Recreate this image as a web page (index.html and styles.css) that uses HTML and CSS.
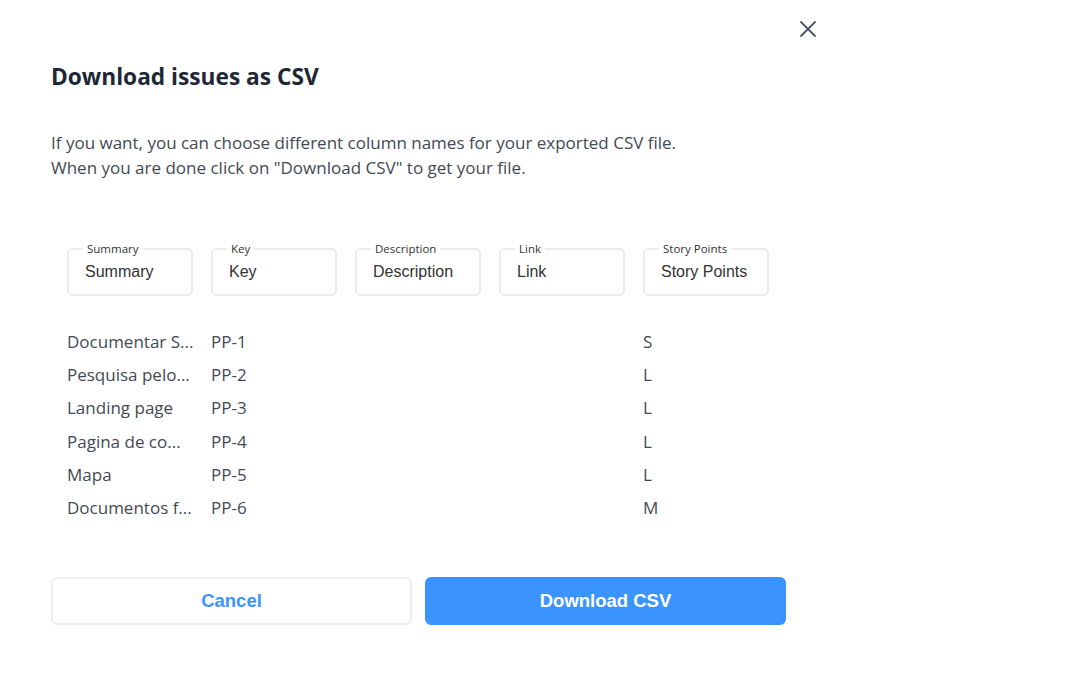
FILE: index.html
```html
<!DOCTYPE html>
<html lang="en">
<head>
<meta charset="utf-8">
<title>Download issues as CSV</title>
<link rel="stylesheet" href="styles.css">
</head>
<body>
<div class="modal">
  <button class="close" aria-label="Close">
    <svg width="18" height="18" viewBox="0 0 18 18"><path d="M2 2 L16 16 M16 2 L2 16" stroke="#4a5563" stroke-width="1.8" stroke-linecap="round" fill="none"/></svg>
  </button>
  <h1 class="title">Download issues as CSV</h1>
  <p class="intro">If you want, you can choose different column names for your exported CSV file.<br>When you are done click on "Download CSV" to get your file.</p>

  <div class="grid fields">
    <fieldset class="field"><legend>Summary</legend><input type="text" value="Summary"></fieldset>
    <fieldset class="field"><legend>Key</legend><input type="text" value="Key"></fieldset>
    <fieldset class="field"><legend>Description</legend><input type="text" value="Description"></fieldset>
    <fieldset class="field"><legend>Link</legend><input type="text" value="Link"></fieldset>
    <fieldset class="field"><legend>Story Points</legend><input type="text" value="Story Points"></fieldset>
  </div>

  <div class="rows">
    <div class="grid row"><span>Documentar S...</span><span>PP-1</span><span></span><span></span><span>S</span></div>
    <div class="grid row"><span>Pesquisa pelo...</span><span>PP-2</span><span></span><span></span><span>L</span></div>
    <div class="grid row"><span>Landing page</span><span>PP-3</span><span></span><span></span><span>L</span></div>
    <div class="grid row"><span>Pagina de co...</span><span>PP-4</span><span></span><span></span><span>L</span></div>
    <div class="grid row"><span>Mapa</span><span>PP-5</span><span></span><span></span><span>L</span></div>
    <div class="grid row"><span>Documentos f...</span><span>PP-6</span><span></span><span></span><span>M</span></div>
  </div>

  <div class="actions">
    <button class="btn btn-cancel">Cancel</button>
    <button class="btn btn-primary">Download CSV</button>
  </div>
</div>
</body>
</html>
```

FILE: styles.css
```css
html, body {
  margin: 0;
  padding: 0;
  background: #ffffff;
}
body {
  font-family: "Open Sans", "Noto Sans", sans-serif;
  color: #434a54;
}
.modal {
  position: relative;
  width: 735px;
  padding: 62px 49px 40px 51px;
}
.close {
  position: absolute;
  top: 20px;
  right: 18px;
  width: 18px;
  height: 18px;
  padding: 0;
  border: 0;
  background: none;
  cursor: pointer;
}
.close svg { display: block; }
.title {
  margin: 0;
  font-size: 22.7px;
  line-height: 30px;
  font-weight: 700;
  color: #1d2836;
}
.intro {
  margin: 38px 0 0;
  font-size: 17px;
  line-height: 25px;
  color: #434a54;
}
.grid {
  display: grid;
  grid-template-columns: repeat(5, 126px);
  column-gap: 18px;
  padding-left: 16px;
}
.fields {
  margin-top: 62px;
}
.field {
  margin: 0;
  min-width: 0;
  padding: 0 0 0 14px;
  height: 50px;
  border: 2px solid #ebebeb;
  border-radius: 5px;
}
.field legend {
  padding: 0 4px;
  font-family: "Open Sans", "Noto Sans", sans-serif;
  font-size: 11.5px;
  line-height: 14px;
  color: #333333;
}
.field input {
  display: block;
  width: 100%;
  box-sizing: border-box;
  margin: 0;
  padding: 5px 0 0 2px;
  border: 0;
  outline: none;
  background: transparent;
  font-family: "Liberation Sans", Arial, sans-serif;
  font-size: 16px;
  line-height: 22px;
  color: #333333;
}
.rows {
  margin-top: 29px;
}
.row {
  height: 33.2px;
  align-items: center;
  font-size: 17px;
  color: #434a54;
  white-space: nowrap;
}
.row span {
  overflow: hidden;
}
.actions {
  display: flex;
  gap: 13px;
  margin-top: 53px;
}
.btn {
  flex: 1;
  height: 48px;
  border-radius: 6px;
  font-family: "Liberation Sans", Arial, sans-serif;
  font-size: 18.5px;
  font-weight: 700;
  cursor: pointer;
}
.btn-cancel {
  background: #ffffff;
  border: 2px solid #eeeeee;
  color: #3b94fe;
}
.btn-primary {
  background: #3b94fe;
  border: 2px solid #3b94fe;
  color: #ffffff;
}
```
